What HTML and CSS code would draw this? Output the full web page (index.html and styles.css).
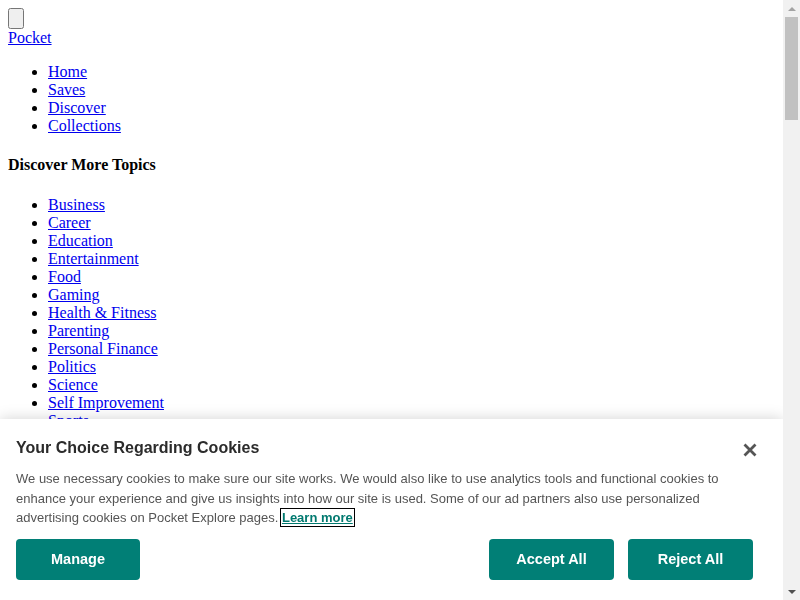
FILE: index.html
```html
<!DOCTYPE html>
<html lang="en">
<head>
  <meta charset="UTF-8">
  <title>Pocket</title>
  <link rel="stylesheet" href="styles.css">
</head>
<body>
  <header>
    <button class="menu-toggle" aria-label="Menu"></button>
    <div><a href="#">Pocket</a></div>
    <ul>
      <li><a href="#">Home</a></li>
      <li><a href="#">Saves</a></li>
      <li><a href="#">Discover</a></li>
      <li><a href="#">Collections</a></li>
    </ul>
  </header>

  <h4>Discover More Topics</h4>
  <ul>
    <li><a href="#">Business</a></li>
    <li><a href="#">Career</a></li>
    <li><a href="#">Education</a></li>
    <li><a href="#">Entertainment</a></li>
    <li><a href="#">Food</a></li>
    <li><a href="#">Gaming</a></li>
    <li><a href="#">Health &amp; Fitness</a></li>
    <li><a href="#">Parenting</a></li>
    <li><a href="#">Personal Finance</a></li>
    <li><a href="#">Politics</a></li>
    <li><a href="#">Science</a></li>
    <li><a href="#">Self Improvement</a></li>
    <li><a href="#">Sports</a></li>
    <li><a href="#">Technology</a></li>
    <li><a href="#">Travel</a></li>
  </ul>

  <main class="stories">
    <h1>Discover</h1>
    <p>Fascinating stories from all across the web, curated by Pocket.</p>
    <h2>Must-Reads</h2>
    <ul>
      <li><a href="#">The Science of Sleep and Why We Need It</a></li>
      <li><a href="#">How to Build Habits That Actually Stick</a></li>
      <li><a href="#">The Hidden History of Everyday Objects</a></li>
      <li><a href="#">What Happens to Your Body When You Walk Every Day</a></li>
      <li><a href="#">The Art of Doing Nothing</a></li>
    </ul>
    <h2>Editors' Picks</h2>
    <ul>
      <li><a href="#">Why Some People Never Get Lost</a></li>
      <li><a href="#">A Brief Guide to Saving Money on Groceries</a></li>
      <li><a href="#">The Case for Reading More Fiction</a></li>
      <li><a href="#">How Cities Are Rethinking Streets</a></li>
    </ul>
    <div class="filler"></div>
    <footer>
      <p>&copy; Pocket</p>
    </footer>
  </main>

  <div class="cookie-banner">
    <button class="cookie-close" aria-label="Close">
      <svg width="14" height="14" viewBox="0 0 14 14"><path d="M1.5 1.5 L12.5 12.5 M12.5 1.5 L1.5 12.5" stroke="#555" stroke-width="2.8" fill="none"/></svg>
    </button>
    <h2 class="cookie-title">Your Choice Regarding Cookies</h2>
    <p class="cookie-text">We use necessary cookies to make sure our site works. We would also like to use analytics tools and functional cookies to enhance your experience and give us insights into how our site is used. Some of our ad partners also use personalized advertising cookies on Pocket Explore pages. <a href="#" class="cookie-link">Learn more</a></p>
    <div class="cookie-actions">
      <button class="cookie-btn">Manage</button>
      <div class="cookie-right">
        <button class="cookie-btn">Accept All</button>
        <button class="cookie-btn">Reject All</button>
      </div>
    </div>
  </div>

  <!-- stand-in for the window's scrollbar -->
  <div class="scrollbar" aria-hidden="true">
    <span class="scroll-arrow up"></span>
    <span class="scroll-thumb"></span>
    <span class="scroll-track"></span>
    <span class="scroll-arrow down"></span>
  </div>
</body>
</html>
```

FILE: styles.css
```css
body {
  font-family: "Liberation Serif", "Times New Roman", serif;
}

.menu-toggle {
  display: block;
  width: 16px;
  height: 21px;
  padding: 0;
}

.filler {
  height: 2300px;
}

.scrollbar {
  position: fixed;
  top: 0;
  right: 0;
  bottom: 0;
  width: 17px;
  display: flex;
  flex-direction: column;
  background: #f1f1f1;
}

.scroll-arrow {
  height: 17px;
  display: flex;
  align-items: center;
  justify-content: center;
}

.scroll-arrow::before {
  content: "";
  border-left: 4px solid transparent;
  border-right: 4px solid transparent;
}

.scroll-arrow.up::before {
  border-bottom: 4px solid #a3a3a3;
}

.scroll-arrow.down::before {
  border-top: 4px solid #505050;
}

.scroll-thumb {
  height: 103px;
  margin: 0 2px;
  background: #c1c1c1;
}

.scroll-track {
  flex: 1;
}

.cookie-banner {
  position: fixed;
  left: 0;
  right: 17px;
  bottom: 0;
  height: 181px;
  box-sizing: border-box;
  padding: 19px 30px 0 16px;
  background: #fff;
  box-shadow: 0 0 14px rgba(0, 0, 0, 0.18);
  font-family: "Liberation Sans", Arial, sans-serif;
}

.cookie-close {
  position: absolute;
  top: 21px;
  right: 23px;
  width: 20px;
  height: 20px;
  padding: 3px;
  border: none;
  background: none;
  cursor: pointer;
}

.cookie-title {
  margin: 0 0 11px;
  font-size: 16px;
  font-weight: bold;
  color: #2b2b2b;
  line-height: 20px;
}

.cookie-text {
  margin: 0;
  font-size: 13px;
  line-height: 19.5px;
  color: #555;
}

.cookie-link {
  color: #00796f;
  font-weight: bold;
  text-decoration: underline;
  outline: 1px solid #000;
  outline-offset: 1px;
}

.cookie-actions {
  display: flex;
  justify-content: space-between;
  margin-top: 11px;
}

.cookie-right {
  display: flex;
  gap: 14px;
}

.cookie-btn {
  width: 124px;
  height: 41px;
  border: none;
  border-radius: 4px;
  background: #017f76;
  color: #fff;
  font-family: "Liberation Sans", Arial, sans-serif;
  font-size: 14.5px;
  font-weight: bold;
  cursor: pointer;
}

.cookie-right .cookie-btn {
  width: 125px;
}
```
